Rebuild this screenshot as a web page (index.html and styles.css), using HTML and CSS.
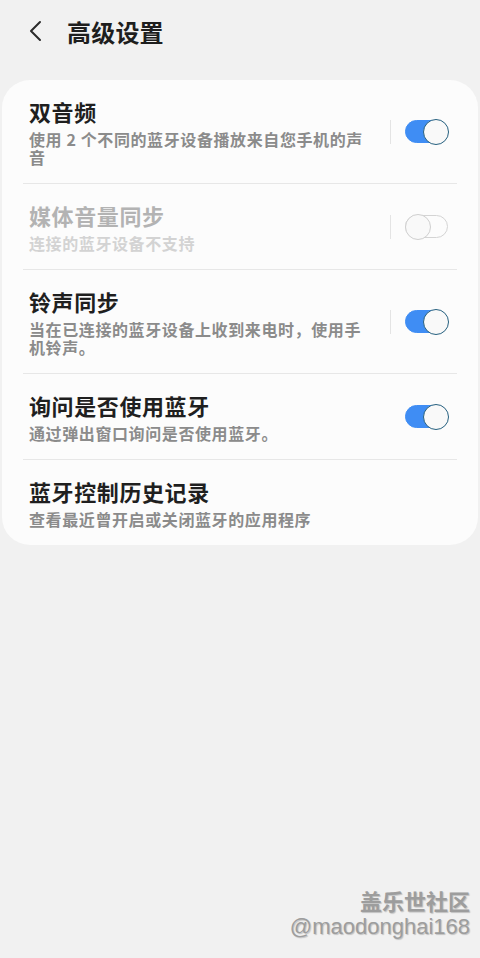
FILE: index.html
```html
<!DOCTYPE html>
<html lang="zh">
<head>
  <meta charset="UTF-8" />
  <title>高级设置</title>
  <meta name="viewport" content="width=device-width, initial-scale=1.0" />
  <link rel="stylesheet" href="styles.css">
</head>
<body>
  <div class="header">
    <svg class="back" width="14" height="22" viewBox="0 0 14 22">
      <path d="M11 2 L2 11 L11 20" fill="none" stroke="#2b2b2b" stroke-width="2" stroke-linecap="round" stroke-linejoin="round"/>
    </svg>
    <h1>高级设置</h1>
  </div>

  <div class="card">
    <div class="item">
      <div class="text">
        <div class="title">双音频</div>
        <div class="sub">使用 2 个不同的蓝牙设备播放来自您手机的声音</div>
      </div>
      <div class="sep"></div>
      <div class="switch on"><div class="knob"></div></div>
    </div>

    <div class="item disabled">
      <div class="text">
        <div class="title">媒体音量同步</div>
        <div class="sub">连接的蓝牙设备不支持</div>
      </div>
      <div class="sep"></div>
      <div class="switch"><div class="knob"></div></div>
    </div>

    <div class="item">
      <div class="text">
        <div class="title">铃声同步</div>
        <div class="sub">当在已连接的蓝牙设备上收到来电时，使用手机铃声。</div>
      </div>
      <div class="sep"></div>
      <div class="switch on"><div class="knob"></div></div>
    </div>

    <div class="item">
      <div class="text">
        <div class="title">询问是否使用蓝牙</div>
        <div class="sub">通过弹出窗口询问是否使用蓝牙。</div>
      </div>
      <div class="switch on"><div class="knob"></div></div>
    </div>

    <div class="item">
      <div class="text">
        <div class="title">蓝牙控制历史记录</div>
        <div class="sub">查看最近曾开启或关闭蓝牙的应用程序</div>
      </div>
    </div>
  </div>

  <div class="watermark">
    <div class="wm-cn">盖乐世社区</div>
    <div class="wm-id">@maodonghai168</div>
  </div>
</body>
</html>
```

FILE: styles.css
```css
body {
  margin: 0;
  background-color: #f1f1f1;
  font-family: "Noto Sans CJK SC", "Noto Sans", sans-serif;
  height: 958px;
  position: relative;
  overflow: hidden;
}

.header {
  height: 62px;
  display: flex;
  align-items: center;
  padding-left: 29px;
}

.header .back {
  display: block;
}

.header h1 {
  margin: 0 0 0 24px;
  font-size: 24px;
  font-weight: 700;
  color: #1e1e1e;
  letter-spacing: 0.2px;
}

.card {
  margin: 18px 2px 0;
  background-color: #fcfcfc;
  border-radius: 28px;
  padding: 0 21px;
}

.item {
  display: flex;
  align-items: center;
  padding: 17px 9px 17px 6px;
  border-bottom: 1px solid #e7e7e7;
}

.item:last-child {
  border-bottom: none;
}

.text {
  flex: 1;
  margin-right: 21px;
}

.title {
  font-size: 22px;
  line-height: 28px;
  font-weight: 700;
  color: #1f1f1f;
  letter-spacing: 0.6px;
}

.sub {
  margin-top: 5px;
  font-size: 16px;
  line-height: 18px;
  font-weight: 700;
  color: #8b8b8b;
  letter-spacing: 0.6px;
}

.disabled .title {
  color: #b3b3b3;
}

.disabled .sub {
  color: #d3d3d3;
}

.sep {
  width: 1px;
  height: 24px;
  background-color: #e4e4e4;
  margin-right: 14px;
}

.switch {
  width: 43px;
  height: 23px;
  box-sizing: border-box;
  border-radius: 12px;
  border: 1.5px solid #d4d4d4;
  display: flex;
  align-items: center;
  justify-content: flex-start;
  flex-shrink: 0;
}

.switch .knob {
  width: 26px;
  height: 26px;
  box-sizing: border-box;
  border-radius: 50%;
  border: 1.5px solid #cfcfcf;
  background-color: #f9f9f9;
  margin-left: -1.5px;
  flex-shrink: 0;
}

.switch.on {
  background-color: #3f8df4;
  border-color: #3f8df4;
  justify-content: flex-end;
}

.switch.on .knob {
  border-color: #26607f;
  margin-left: 0;
  margin-right: -1.5px;
}

.watermark {
  position: absolute;
  right: 10px;
  bottom: 18px;
  text-align: right;
  color: #9d9d9d;
  text-shadow: 1px 1px 1px rgba(0, 0, 0, 0.2);
}

.wm-cn {
  font-size: 22px;
  line-height: 28px;
  font-weight: 700;
}

.wm-id {
  font-family: "Liberation Sans", sans-serif;
  font-size: 22px;
  line-height: 26px;
}
```
